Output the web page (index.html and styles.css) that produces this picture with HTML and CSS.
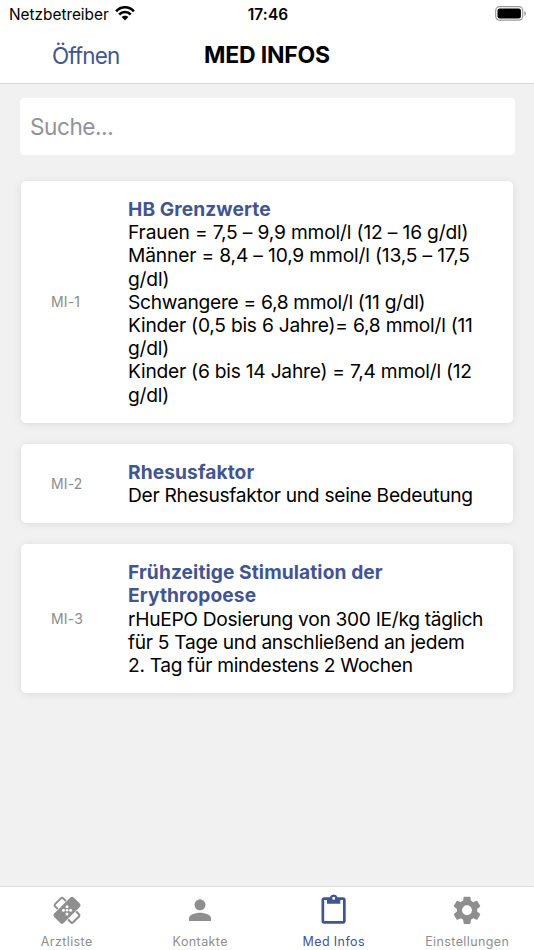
FILE: index.html
```html
<!DOCTYPE html>
<html lang="de">
<head>
<meta charset="utf-8">
<meta name="viewport" content="width=device-width, initial-scale=1">
<title>Med Infos</title>
<link rel="stylesheet" href="styles.css">
</head>
<body>
<div class="app">
  <header class="header">
    <div class="status">
      <div class="carrier"><span>Netzbetreiber</span>
        <svg class="wifi" viewBox="0 0 20 15"><g fill="none" stroke="#000" stroke-width="2.6"><path d="M1.1 5.3C6-.1 14-.1 18.9 5.3"/><path d="M4.2 8.5c3.2-3.3 8.4-3.3 11.6 0"/></g><path d="M6.6 11.1c1.9-1.8 4.9-1.8 6.8 0L10 14.6z"/></svg>
      </div>
      <time class="clock">17:46</time>
      <svg class="battery" viewBox="0 0 32 15"><rect x=".7" y=".7" width="27" height="13.4" rx="3.8" fill="none" stroke="#999" stroke-width="1.2"/><rect x="2.5" y="2.4" width="23.4" height="10" rx="2.2"/><path d="M29.3 5v5c2.1-.8 2.1-4.2 0-5z" fill="#999"/></svg>
    </div>
    <div class="navbar">
      <a class="open">Öffnen</a>
      <h1 class="title">MED INFOS</h1>
    </div>
  </header>
  <main class="content">
    <input class="search" type="text" placeholder="Suche..." aria-label="Suche">
    <article class="card">
      <div class="code">MI-1</div>
      <div class="info">
        <h2>HB Grenzwerte</h2>
        <p class="values">Frauen = 7,5 – 9,9 mmol/l (12 – 16 g/dl)<br>Männer = 8,4 – 10,9 mmol/l (13,5 – 17,5<br>g/dl)<br><span class="tight">Schwangere = 6,8 mmol/l (11 g/dl)</span><br><span class="snug">Kinder (0,5 bis 6 Jahre)= 6,8 mmol/l (11<br>g/dl)<br>Kinder (6 bis 14 Jahre) = 7,4 mmol/l (12<br>g/dl)</span></p>
      </div>
    </article>
    <article class="card">
      <div class="code">MI-2</div>
      <div class="info">
        <h2>Rhesusfaktor</h2>
        <p>Der Rhesusfaktor und seine Bedeutung</p>
      </div>
    </article>
    <article class="card">
      <div class="code">MI-3</div>
      <div class="info">
        <h2>Frühzeitige Stimulation der<br>Erythropoese</h2>
        <p class="tight">rHuEPO Dosierung von 300 IE/kg täglich<br>für 5 Tage und anschließend an jedem<br>2. Tag für mindestens 2 Wochen</p>
      </div>
    </article>
  </main>
  <nav class="tabs">
    <a class="tab">
      <svg viewBox="0 0 32 32"><g transform="rotate(45 16 16.3)"><rect x="3.2" y="10.6" width="25.6" height="11.4" rx="1.6" fill="#fff" stroke="currentColor" stroke-width="2"/></g><g transform="rotate(-45 16 16.3)"><rect x="2" y="9" width="28" height="14.6" fill="#fff"/><rect x="2.2" y="9.6" width="27.6" height="13.4" rx="2.4" fill="currentColor"/></g><g fill="#fff"><circle cx="16" cy="12.7" r="1.5"/><circle cx="12.4" cy="16.3" r="1.5"/><circle cx="19.6" cy="16.3" r="1.5"/><circle cx="16" cy="19.9" r="1.5"/><circle cx="16" cy="16.3" r="1.3"/></g></svg>
      <span>Arztliste</span>
    </a>
    <a class="tab">
      <svg viewBox="0 0 32 32"><circle cx="16" cy="10.8" r="5.5" fill="currentColor"/><path d="M5 27v-3c0-3.7 7.3-5.3 11-5.3s11 1.6 11 5.3v3z" fill="currentColor"/></svg>
      <span>Kontakte</span>
    </a>
    <a class="tab active">
      <svg viewBox="0 0 32 32"><path fill="currentColor" fill-rule="evenodd" d="M6 3.2h5.8a4.2 4.2 0 0 1 7.8 0h5.4a2.7 2.7 0 0 1 2.7 2.6v21.3a2.7 2.7 0 0 1-2.7 2.6H6.2a2.7 2.7 0 0 1-2.7-2.6V5.8a2.7 2.7 0 0 1 2.5-2.6zM6.2 5.9v21.1H25V5.9h-2.7v3.9H9V5.9zM15.7 2.8a1.5 1.5 0 1 0 0 3 1.5 1.5 0 0 0 0-3z"/></svg>
      <span>Med Infos</span>
    </a>
    <a class="tab">
      <svg viewBox="0.7 0.5 22.6 22.6"><path fill="currentColor" d="M19.14 12.94c.04-.3.06-.61.06-.94s-.02-.64-.07-.94l2.03-1.58a.49.49 0 0 0 .12-.61l-1.92-3.32a.49.49 0 0 0-.59-.22l-2.39.96a7 7 0 0 0-1.62-.94l-.36-2.54a.48.48 0 0 0-.48-.41h-3.84a.48.48 0 0 0-.47.41l-.36 2.54c-.59.24-1.13.57-1.62.94l-2.39-.96a.48.48 0 0 0-.59.22L2.74 8.87a.48.48 0 0 0 .12.61l2.03 1.58a6 6 0 0 0 0 1.88l-2.03 1.58a.49.49 0 0 0-.12.61l1.92 3.32c.12.22.37.29.59.22l2.39-.96c.5.38 1.03.7 1.62.94l.36 2.54c.05.24.24.41.48.41h3.84c.24 0 .44-.17.47-.41l.36-2.54a7 7 0 0 0 1.62-.94l2.39.96c.22.08.47 0 .59-.22l1.92-3.32a.48.48 0 0 0-.12-.61zM12 15.5a3.5 3.5 0 1 1 0-7 3.5 3.5 0 0 1 0 7z"/></svg>
      <span>Einstellungen</span>
    </a>
  </nav>
</div>
</body>
</html>
```
FILE: styles.css
```css
* { box-sizing: border-box; }
body { margin: 0; font-family: Inter, "Liberation Sans", sans-serif; color: #000; }
h1, h2, p { margin: 0; }
.app { height: 950px; display: flex; flex-direction: column; background: #f1f1f1; overflow: hidden; }
.header { height: 84px; flex: none; background: #fff; border-bottom: 1.5px solid #d8d8d8; }
.status { height: 28px; display: grid; grid-template-columns: 1fr auto 1fr; align-items: center; padding: 0 7px 0 9px; font-size: 15.4px; }
.carrier { display: flex; align-items: center; gap: 6px; letter-spacing: -.02px; }
.wifi { width: 20px; height: 15px; margin-top: -2px; }
.clock { font-weight: 600; letter-spacing: .15px; }
.battery { width: 32px; height: 15px; justify-self: end; margin-top: -1px; }
.navbar { height: 54px; display: grid; grid-template-columns: 1fr auto 1fr; align-items: center; }
.open { padding-left: 52px; font-size: 22.5px; letter-spacing: -.9px; color: #435590; }
.title { font-size: 23px; font-weight: 700; letter-spacing: -.2px; }
.content { flex: 1; padding: 14px 20px 0; }
.search { display: block; width: 494.5px; height: 57px; padding: 0 10px; border: 0; border-radius: 4px; background: #fff; font: 22.6px Inter, "Liberation Sans", sans-serif; letter-spacing: -.45px; margin-bottom: 26px; outline: 0; }
.search::placeholder { color: #929296; opacity: 1; }
.card { display: flex; align-items: center; margin: 0 1px 21px; padding: 17px 0 16px; background: #fff; border-radius: 5px; box-shadow: 0 1px 9px rgba(0,0,0,.09); }
.code { width: 107px; flex: none; padding: 0 0 2px 30px; font-size: 14px; letter-spacing: .15px; color: #8c8c90; }
.info { font-size: 19.2px; line-height: 23.2px; white-space: nowrap; letter-spacing: -.28px; }
.info h2 { font-size: 19.2px; font-weight: 700; letter-spacing: .08px; color: #435590; }
.values { letter-spacing: -.16px; }
.snug { letter-spacing: -.23px; }
.tight { letter-spacing: -.31px; }
.tabs { height: 64px; flex: none; display: grid; grid-template-columns: repeat(4, 1fr); background: #fff; border-top: 1px solid #dedede; }
.tab { display: flex; flex-direction: column; align-items: center; color: #8e8e8e; font-size: 12.5px; letter-spacing: .4px; }
.tab svg { width: 32px; height: 32px; margin-top: 7px; }
.tab span { line-height: 16px; margin-top: 8px; }
.tab.active { color: #435590; }
```
